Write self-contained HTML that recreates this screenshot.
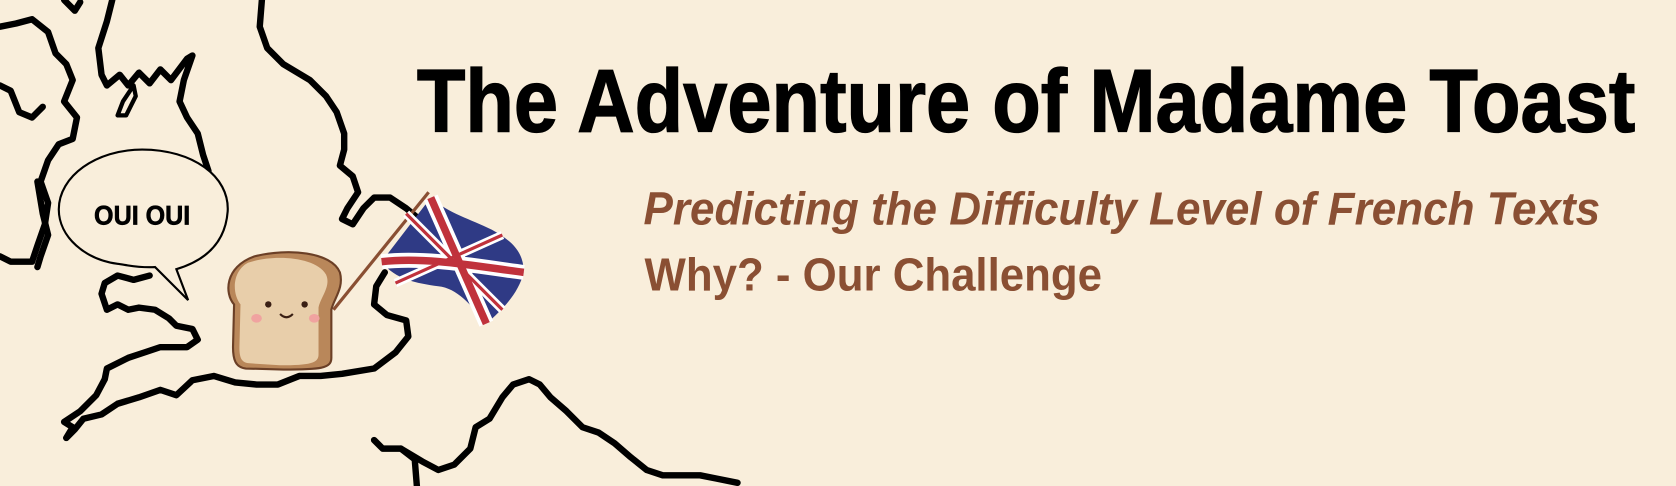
<!DOCTYPE html>
<html><head><meta charset="utf-8"><style>
html,body{margin:0;padding:0;background:#f9eedb;}
svg{display:block}
</style></head><body>
<svg width="1676" height="486" viewBox="0 0 1568 455" preserveAspectRatio="none" xmlns="http://www.w3.org/2000/svg">
<rect width="1568" height="455" fill="#f9eedb"/>
<g fill="none" stroke="#000" stroke-width="6" stroke-linejoin="round" stroke-linecap="round">
<path d="M0 25 L15 22 L30 18 L45 30 L52 50 L62 60 L68 75 L60 95 L72 110 L68 130 L55 135 L45 150 L38 170 L45 190 L42 210 L35 230 L30 245 L10 245 L0 240"/>
<path d="M0 80 L10 85 L18 105 L30 110 L40 100"/>
<path d="M60 0 L70 10 L75 2"/>
<path d="M105 0 L100 20 L92 45 L95 70 L100 80 L112 70 L120 80 L130 68 L140 78 L150 65 L160 75 L175 55 L180 52 L172 75 L168 95 L175 110 L185 125 L190 145 L195 160 L192 180 L195 200"/>
<path d="M122 100 L127 90 L125 80 L115 95 L110 108 L118 108 Z" stroke-width="4"/>
<path d="M35 170 L40 200 L45 220 L38 240 L35 250"/>
<path d="M245 0 L243 25 L250 45 L265 60 L290 75 L305 90 L315 105 L322 125 L322 140 L318 155 L330 165 L335 180 L325 195 L320 205 L330 210 L340 195 L350 185 L365 185 L380 195 L392 205"/>
<path d="M360 255 L352 268 L350 285 L362 295 L380 300 L382 315 L370 330 L350 345 L320 350 L300 352 L280 352 L260 360 L240 360 L220 358 L200 352 L180 356 L165 370 L150 365 L130 372 L110 378 L95 388 L78 392 L70 402 L62 410 L68 400 L60 395 L75 385 L90 370 L98 355 L100 345 L120 335 L135 330 L150 325 L175 325 L185 318 L180 308 L165 305 L158 298 L145 290 L130 288 L120 290 L110 285 L100 290 L95 275 L98 265 L110 258 L125 262 L140 258"/>
<path d="M350 412 L358 420 L375 420 L388 430 L390 455"/>
<path d="M375 420 L395 432 L410 440 L425 435 L440 420 L445 400 L458 392 L470 372 L480 360 L495 355 L505 360 L515 372 L530 385 L545 400 L560 405 L575 415 L590 428 L605 440 L620 445 L640 445 L655 445 L670 448 L690 452"/>
</g>
<path d="M133 140 C180 140 215 165 213 198 C211 225 195 243 165 252 L176 281 L145 250 C130 251 118 248 110 247 C80 243 55 222 55 196 C55 165 90 140 133 140 Z" fill="#f9eedb" stroke="#000" stroke-width="2"/>
<text x="133" y="210" text-anchor="middle" font-family="Liberation Sans, sans-serif" font-weight="bold" font-size="25" fill="#000" stroke="#000" stroke-width="0.6" textLength="90" lengthAdjust="spacingAndGlyphs">OUI OUI</text>
<line x1="312" y1="290" x2="401" y2="180" stroke="#8a4f33" stroke-width="3"/>
<g>
<path d="M403 185 C420 200 440 205 460 215 C478 225 490 235 490 255 C485 275 470 290 455 303 C440 285 428 270 410 268 C390 265 370 262 357 245 Z" fill="#2f3a85"/>
<path d="M403 185 L455 303 M357 245 C400 240 450 250 490 255" stroke="#fff" stroke-width="14" fill="none"/>
<path d="M380 200 L470 290 M470 220 L370 265" stroke="#fff" stroke-width="8" fill="none"/>
<path d="M380 200 L470 290 M470 220 L370 265" stroke="#c0323c" stroke-width="3" fill="none"/>
<path d="M403 185 L455 303" stroke="#c0323c" stroke-width="7"/>
<path d="M357 245 C400 240 450 250 490 255" stroke="#c0323c" stroke-width="7" fill="none"/>
</g>
<path d="M238 240 C270 232 310 236 318 255 C322 270 312 280 310 290 L310 335 C310 345 300 346 265 346 L230 345 C220 344 218 336 218 325 L219 285 C210 275 210 250 238 240 Z" fill="#b9875a" stroke="#6b3f26" stroke-width="2"/>
<path d="M232 246 C255 238 295 240 305 257 C310 268 300 278 298 288 L298 332 C298 340 290 342 262 342 L232 340 C225 339 224 333 224 325 L225 285 C217 275 217 254 232 246 Z" fill="#e8ceaa"/>
<circle cx="251" cy="285" r="3" fill="#3a1f14"/>
<circle cx="285" cy="285" r="3" fill="#3a1f14"/>
<path d="M262 294 Q268 300 274 294" stroke="#3a1f14" stroke-width="2" fill="none"/>
<ellipse cx="240" cy="298" rx="5" ry="4" fill="#f0a3a0"/>
<ellipse cx="294" cy="298" rx="5" ry="4" fill="#f0a3a0"/>
<text x="390" y="123" font-family="Liberation Sans, sans-serif" font-weight="bold" font-size="83" fill="#000" stroke="#000" stroke-width="1.2" textLength="1140" lengthAdjust="spacingAndGlyphs">The Adventure of Madame Toast</text>
<text x="602" y="210" font-family="Liberation Sans, sans-serif" font-weight="bold" font-style="italic" font-size="43" fill="#8a4f33" textLength="895" lengthAdjust="spacingAndGlyphs">Predicting the Difficulty Level of French Texts</text>
<text x="603" y="272" font-family="Liberation Sans, sans-serif" font-weight="bold" font-size="43" fill="#8a4f33" textLength="428" lengthAdjust="spacingAndGlyphs">Why? - Our Challenge</text>
</svg>
</body></html>
